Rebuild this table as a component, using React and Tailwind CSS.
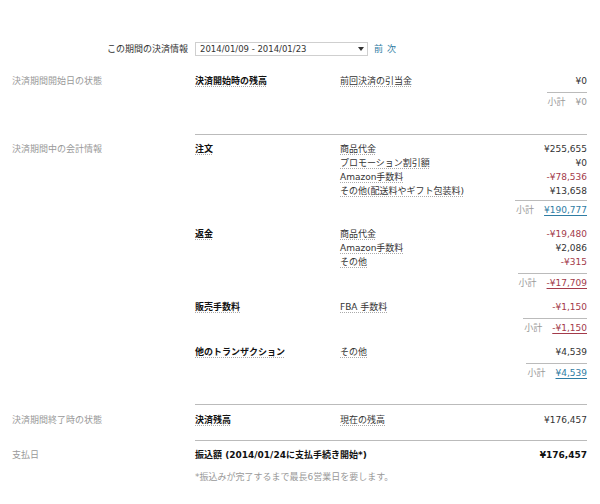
const RED = "text-[#a33a4a]";

function Amount({ v, bold }) {
  const neg = v.startsWith("-");
  return <span className={(neg ? RED : "text-[#333]") + (bold ? " font-bold text-[#111]" : "")}>{v}</span>;
}

function Label({ children }) {
  return (
    <span className="underline decoration-dotted decoration-[#aaa] underline-offset-2">{children}</span>
  );
}

function Subtotal({ v, mt = "mt-[4px]", plain }) {
  const neg = v.startsWith("-");
  const cls = plain
    ? "text-[#999]"
    : (neg ? RED : "text-[#2f7ca3]") + " underline decoration-solid underline-offset-2";
  return (
    <div className={"flex justify-end " + mt}>
      <div className="border-t border-[#bbb] pt-[2px] flex gap-[10px] pl-[1px]">
        <span className="text-[#999]">小計</span>
        <span className={cls}>{v}</span>
      </div>
    </div>
  );
}

function Group({ title, rows, sub, subMt, plain }) {
  return (
    <div>
      <div className="grid grid-cols-[145px_1fr]">
        <div className="font-bold text-[#111]">
          <Label>{title}</Label>
        </div>
        <div className="flex flex-col">
          {rows.map(([l, v], i) => (
            <div key={i} className="flex justify-between h-[14px]">
              <Label>{l}</Label>
              <Amount v={v} />
            </div>
          ))}
        </div>
      </div>
      {sub && <Subtotal v={sub} mt={subMt} plain={plain} />}
    </div>
  );
}

function Section({ label, children, className, labelPad = "" }) {
  return (
    <div className="grid grid-cols-[183px_1fr]">
      <div className={"text-[#999] " + labelPad}>{label}</div>
      <div className={className}>{children}</div>
    </div>
  );
}

export default function App() {
  return (
    <div className="w-[600px] h-[504px] bg-white text-[9px] leading-[14px] text-[#333] font-['DejaVu_Sans','Noto_Sans_CJK_JP',sans-serif] pl-[12px] pr-[13px] pt-[42px]">
      {/* top selector */}
      <div className="grid grid-cols-[183px_1fr] items-center">
        <div className="text-right pr-[7px] text-[#333]">この期間の決済情報</div>
        <div className="flex items-center gap-[6px]">
          <div className="w-[173px] h-[14px] border border-[#cfcfcf] flex items-center justify-between pl-[4px] pr-[3px] text-[8.5px] text-[#333]">
            <span>2014/01/09 - 2014/01/23</span>
            <svg width="6" height="4" viewBox="0 0 6 4">
              <path d="M0 0 L6 0 L3 4 Z" fill="#333" />
            </svg>
          </div>
          <div className="flex gap-[4px] text-[#2f7ca3]">
            <span>前</span>
            <span>次</span>
          </div>
        </div>
      </div>

      {/* section 1 */}
      <div className="mt-[18px]">
        <Section label="決済期間開始日の状態" className="border-b border-[#bbb] pb-[25px]">
          <Group title="決済開始時の残高" rows={[["前回決済の引当金", "¥0"]]} sub="¥0" plain />
        </Section>
      </div>

      {/* section 2 */}
      <Section label="決済期間中の会計情報" labelPad="pt-[7px]" className="pt-[7px] border-b border-[#bbb] pb-[24px]">
        <div className="flex flex-col gap-[10px]">
          <Group
            title="注文"
            rows={[
              ["商品代金", "¥255,655"],
              ["プロモーション割引額", "¥0"],
              ["Amazon手数料", "-¥78,536"],
              ["その他(配送料やギフト包装料)", "¥13,658"],
            ]}
            sub="¥190,777"
            subMt="mt-[2px]"
          />
          <Group
            title="返金"
            rows={[
              ["商品代金", "-¥19,480"],
              ["Amazon手数料", "¥2,086"],
              ["その他", "-¥315"],
            ]}
            sub="-¥17,709"
          />
          <Group title="販売手数料" rows={[["FBA 手数料", "-¥1,150"]]} sub="-¥1,150" />
          <Group title="他のトランザクション" rows={[["その他", "¥4,539"]]} sub="¥4,539" />
        </div>
      </Section>

      {/* section 3 */}
      <Section label="決済期間終了時の状態" labelPad="pt-[8px]" className="pt-[8px] border-b border-[#bbb] pb-[13px]">
        <Group title="決済残高" rows={[["現在の残高", "¥176,457"]]} />
      </Section>

      {/* section 4 */}
      <Section label="支払日" labelPad="pt-[7px]" className="pt-[7px]">
        <div className="flex justify-between font-bold text-[#111]">
          <span>振込額 (2014/01/24に支払手続き開始*)</span>
          <span>¥176,457</span>
        </div>
        <div className="mt-[8px] text-[#999]">*振込みが完了するまで最長6営業日を要します。</div>
      </Section>
    </div>
  );
}
